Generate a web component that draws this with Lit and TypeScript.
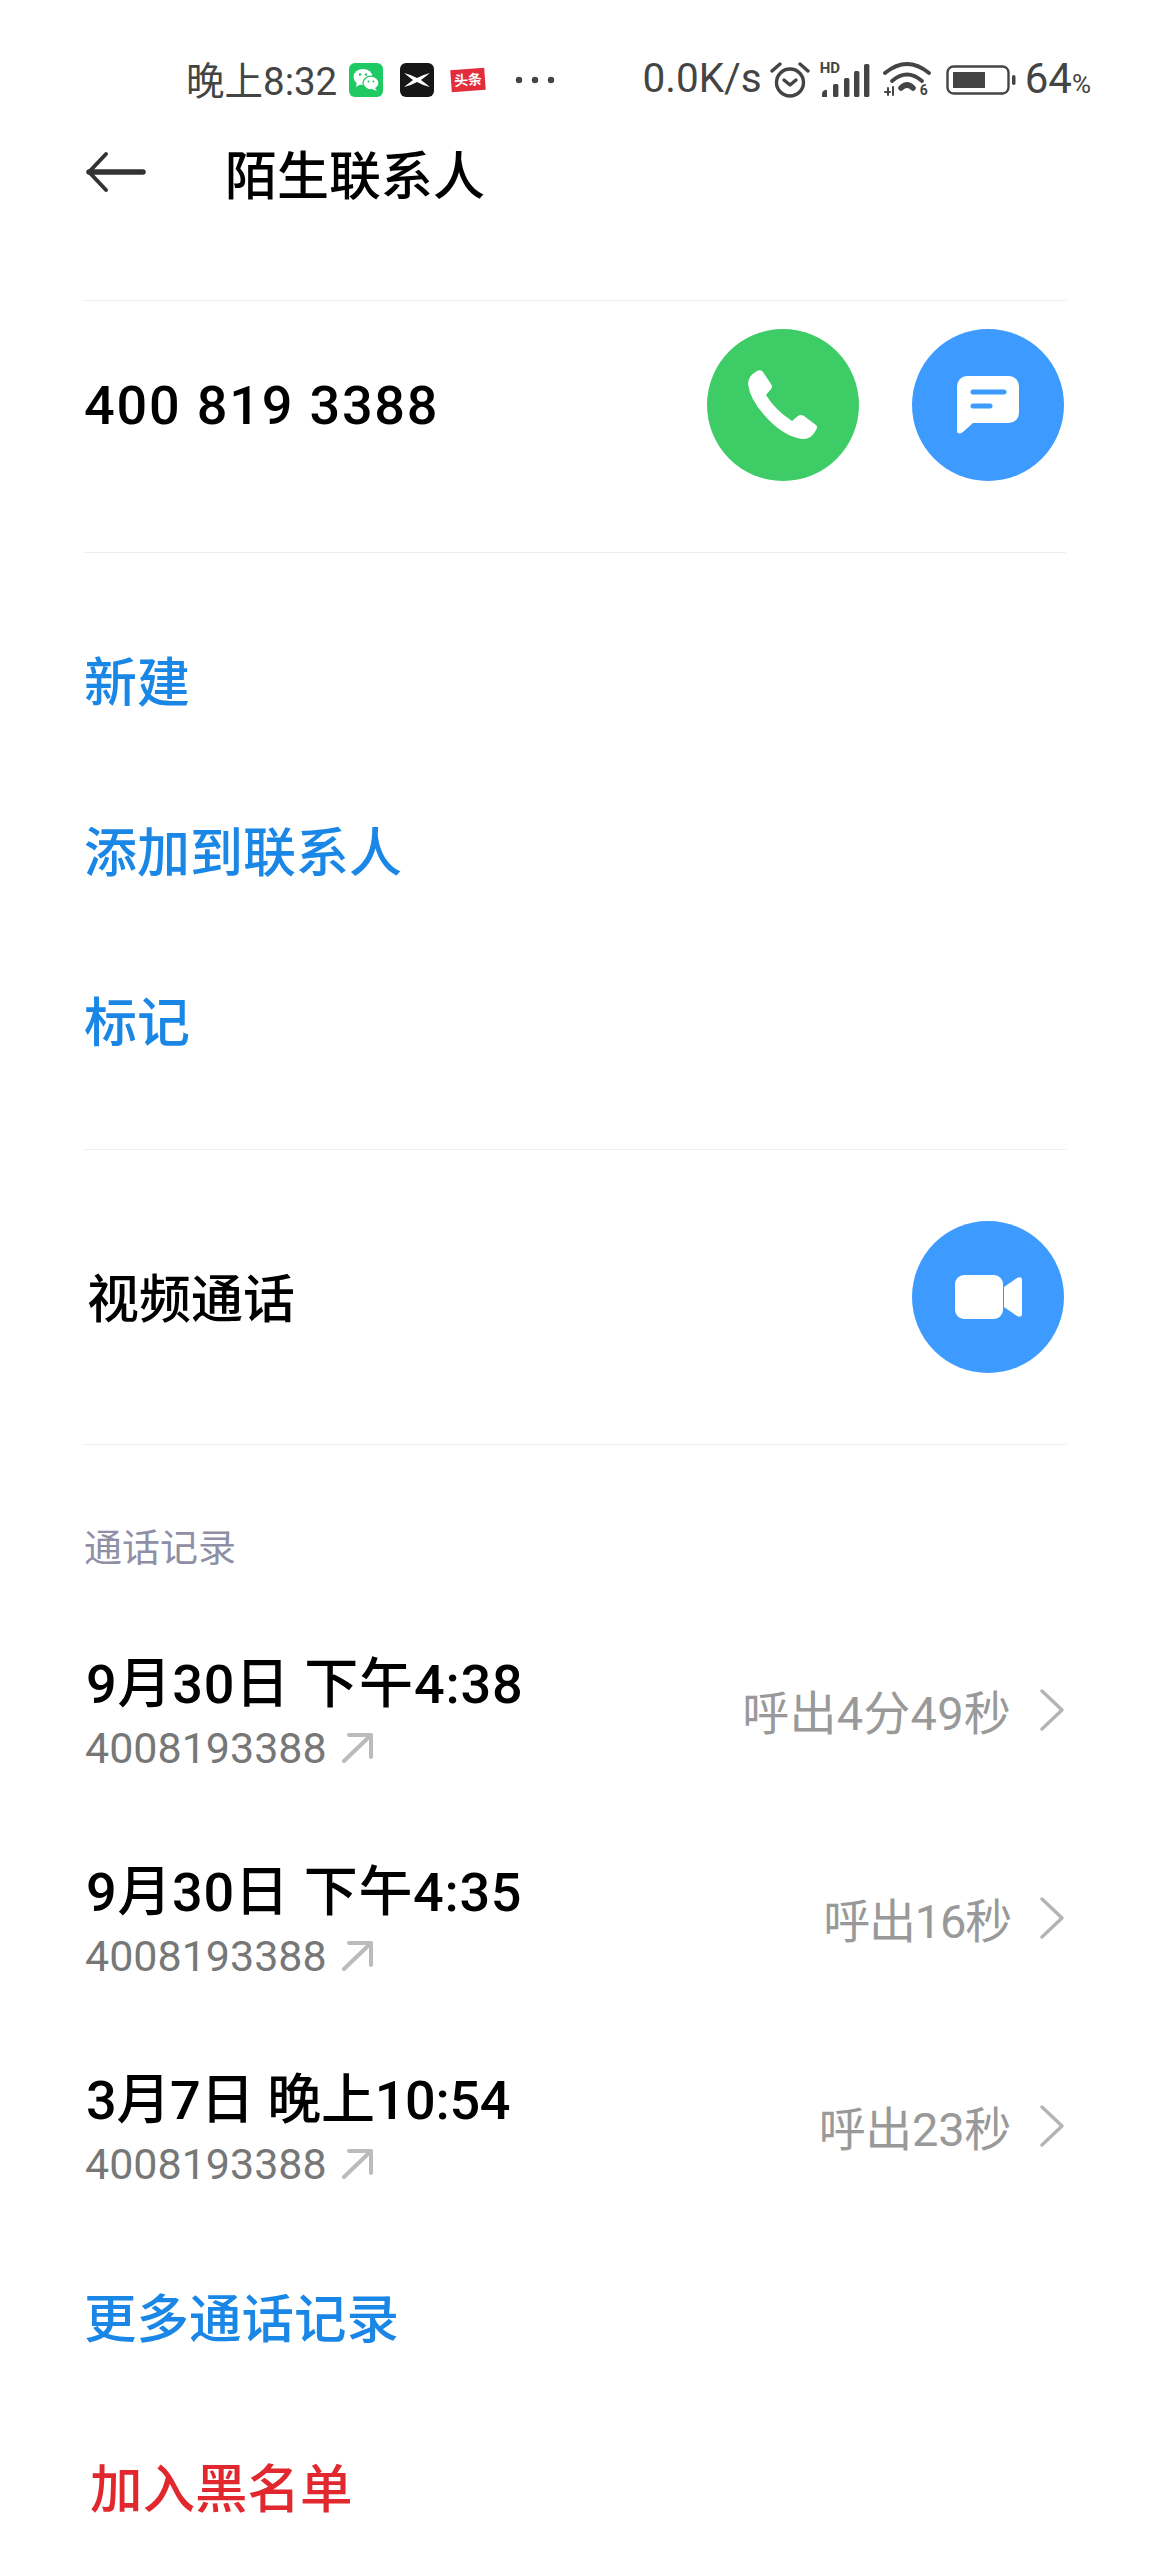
import {css, html, LitElement} from 'lit';
import {customElement} from 'lit/decorators.js';

const calls = [
	{when: '9月30日 下午4:38', result: '呼出4分49秒', whenTrack: 0.8, resultTrack: 0.2},
	{when: '9月30日 下午4:35', result: '呼出16秒', whenTrack: 0.7, resultTrack: -1.2},
	{when: '3月7日 晚上10:54', result: '呼出23秒', whenTrack: -0.3, resultTrack: -0.3},
];

type Call = typeof calls[number];

@customElement('app-root')
export class AppRoot extends LitElement {
	protected render() {
		return html`
		<div class="status">
			<span class="time">晚上8:32</span>
			${this.renderNotifications()}
			<span class="grow"></span>
			${this.renderSystemIcons()}
		</div>
		<div class="header">
			<svg class="back" width="60" height="42" viewBox="0 0 60 42" fill="none" stroke="#333" stroke-width="4" stroke-linecap="round" stroke-linejoin="round">
				<path d="M20 3 3 21l17 18"/>
				<path d="M3 21h54" stroke-width="5.5"/>
			</svg>
			<span class="title">陌生联系人</span>
		</div>

		<div class="content">
			<div class="divider first"></div>
			<div class="row number-row">
				<span class="number">400 819 3388</span>
				<div class="actions">
					<div class="circle green">
						<svg width="70" height="70" viewBox="0 0 70 70" fill="#fff"><path d="M9 1Q13-1 15 2L23 14Q25 17 23 19L18 25Q27 40 44 51L50 46Q53 44 56 46L68 55Q70 57 68 60Q63 70 54 69Q35 66 18 47Q2 30 0 14Q0 6 9 1Z"/></svg>
					</div>
					<div class="circle blue">
						<svg width="62" height="58" viewBox="0 0 62 58">
							<path fill="#fff" d="M10 0H52a10 10 0 0 1 10 10V37a10 10 0 0 1-10 10H16L6 56Q0 60 0 54V10A10 10 0 0 1 10 0Z"/>
							<path stroke="#3d9bff" stroke-width="5" stroke-linecap="round" fill="none" d="M16 16H47M16 30H33"/>
						</svg>
					</div>
				</div>
			</div>
			<div class="divider"></div>

			<div class="links">
				<div class="link">新建</div>
				<div class="link">添加到联系人</div>
				<div class="link">标记</div>
			</div>
			<div class="divider"></div>

			<div class="row video-row">
				<span class="video-label">视频通话</span>
				<div class="circle blue video">
					<svg width="67" height="44" viewBox="0 0 67 44" fill="#fff">
						<rect width="48" height="44" rx="9"/>
						<path d="M49 12 62 3Q67 1 67 5V39Q67 43 62 41L49 32Z"/>
					</svg>
				</div>
			</div>
			<div class="divider"></div>

			<div class="section-label">通话记录</div>
			${calls.map(c => this.renderCall(c))}
			<div class="link more">更多通话记录</div>
			<div class="link block">加入黑名单</div>
		</div>
		`;
	}

	private renderNotifications() {
		return html`
		<svg class="app wechat" width="34" height="34" viewBox="0 0 34 34">
			<rect width="34" height="34" rx="6" fill="#1fc964"/>
			<ellipse cx="14" cy="14" rx="9.5" ry="8" fill="#fff"/>
			<path d="M8 19l-1 5 5-3z" fill="#fff"/>
			<ellipse cx="22" cy="20" rx="8" ry="6.8" fill="#fff" stroke="#1fc964" stroke-width="1.2"/>
			<path d="M26 25l2 3-5-2z" fill="#fff"/>
			<circle cx="11" cy="11.5" r="1.2" fill="#1fc964"/>
			<circle cx="17" cy="11.5" r="1.2" fill="#1fc964"/>
			<circle cx="19.5" cy="18.5" r="1" fill="#1fc964"/>
			<circle cx="24.5" cy="18.5" r="1" fill="#1fc964"/>
		</svg>
		<svg class="app x" width="34" height="34" viewBox="0 0 34 34">
			<rect width="34" height="34" rx="6" fill="#161616"/>
			<path fill="#fff" d="M4 10Q12 12 17 15Q22 12 30 10Q25 14 21 17Q25 20 30 24Q22 22 17 19Q12 22 4 24Q9 20 13 17Q9 14 4 10Z"/>
		</svg>
		<span class="toutiao">头条</span>
		<svg class="dots" width="40" height="8" viewBox="0 0 40 8" fill="#444">
			<circle cx="4" cy="4" r="3.2"/><circle cx="20" cy="4" r="3.2"/><circle cx="36" cy="4" r="3.2"/>
		</svg>
		`;
	}

	private renderSystemIcons() {
		return html`
		<span class="speed">0.0K/s</span>
		<svg class="alarm" width="40" height="36" viewBox="0 0 40 36" fill="none" stroke="#444" stroke-width="3.4">
			<circle cx="20" cy="20.5" r="13.5"/>
			<path d="M14 18l6 5 6-5" stroke-linecap="round" stroke-linejoin="round"/>
			<path d="M2 9l8-7M38 9l-8-7" stroke-linecap="round"/>
		</svg>
		<div class="signal">
			<span class="hd">HD</span>
			<svg width="50" height="34" viewBox="0 0 50 34" fill="#444">
				<path d="M2 34v-3q0-3 3-4 2-1 2 1v6z"/>
				<rect x="13" y="21" width="5.4" height="13" rx="1.5"/>
				<rect x="24" y="15" width="5.4" height="19" rx="1.5"/>
				<rect x="34" y="8" width="5.4" height="26" rx="1.5"/>
				<rect x="44" y="1" width="5.4" height="33" rx="1.5"/>
			</svg>
		</div>
		<div class="wifi">
			<svg width="48" height="38" viewBox="0 0 48 38" fill="none" stroke="#444" stroke-width="3.8" stroke-linecap="round">
				<path d="M2 12Q24-6 46 12"/>
				<path d="M9 20Q24 7 39 20"/>
				<path d="M18 27Q24 21 30 27" stroke-width="5.5"/>
				<path d="M2 31h5M5 27v7M10 26v8" stroke-width="2"/>
			</svg>
			<span class="wifi-gen">6</span>
		</div>
		<svg class="battery" width="70" height="30" viewBox="0 0 70 30">
			<rect x="1.5" y="1.5" width="61" height="27" rx="6" fill="none" stroke="#444" stroke-width="2.4"/>
			<rect x="7" y="7" width="32" height="16" fill="#444"/>
			<rect x="66" y="10" width="3.5" height="10" rx="1.7" fill="#444"/>
		</svg>
		<span class="pct">64<small>%</small></span>
		`;
	}

	private renderCall(c: Call) {
		return html`
		<div class="row call">
			<div>
				<div class="when" style="letter-spacing: ${c.whenTrack}px">${c.when}</div>
				<div class="sub">
					<span>4008193388</span>
					<svg width="32" height="32" viewBox="0 0 32 32" fill="none" stroke="#bbb" stroke-width="4" stroke-linecap="round" stroke-linejoin="round">
						<path d="M3 29 30 3M8 3h22v22"/>
					</svg>
				</div>
			</div>
			<div class="result">
				<span style="letter-spacing: ${c.resultTrack}px">${c.result}</span>
				<svg width="24" height="42" viewBox="0 0 24 42" fill="none" stroke="#b4b4b4" stroke-width="3.4" stroke-linecap="round" stroke-linejoin="round">
					<path d="M2 2 22 21 2 40"/>
				</svg>
			</div>
		</div>
		`;
	}

	static styles = css`
		:host {
			display: block;
			width: 1150px;
			height: 2556px;
			background: #fff;
			overflow: hidden;
			font-family: Roboto, "Noto Sans CJK SC", sans-serif;
			color: #000;
		}

		.status {
			display: flex;
			align-items: center;
			box-sizing: border-box;
			height: 130px;
			padding: 30px 59px 0 186px;
			color: #444;
		}
		.grow { flex: 1; }
		.time { font-size: 38.5px; width: 151px; white-space: nowrap; margin-bottom: 4px; }
		.app { flex: none; }
		.wechat { margin-left: 12px; }
		.x { margin-left: 17px; }
		.toutiao {
			flex: none;
			box-sizing: border-box;
			width: 34px;
			height: 22px;
			margin-left: 17px;
			background: #e22d3a;
			color: #fff;
			font-size: 14px;
			font-weight: 700;
			line-height: 22px;
			text-align: center;
			white-space: nowrap;
			transform: rotate(-4deg);
		}
		.dots { margin-left: 30px; }
		.speed { font-size: 40.5px; white-space: nowrap; margin-bottom: 4px; }
		.alarm { margin-left: 8px; }
		.signal { display: flex; margin-left: 10px; position: relative; }
		.hd {
			position: absolute;
			left: 0;
			top: -3px;
			font-size: 15px;
			font-weight: 700;
			line-height: 16px;
		}
		.wifi { display: flex; margin-left: 13px; position: relative; }
		.wifi-gen {
			position: absolute;
			right: 3px;
			bottom: 2px;
			font-size: 14px;
			font-weight: 700;
			line-height: 14px;
		}
		.battery { margin-left: 15px; }
		.pct { margin-left: 9px; font-size: 42px; white-space: nowrap; margin-bottom: 4px; }
		.pct small { font-size: 26px; }

		.header {
			display: flex;
			align-items: center;
			height: 84px;
			padding-left: 86px;
		}
		.title {
			margin-left: 79px;
			font-size: 52px;
			font-weight: 500;
		}

		.content {
			width: 982px;
			margin-left: 84px;
		}
		.divider {
			height: 1px;
			background: #eee;
		}
		.divider.first { margin-top: 86px; }

		.row {
			display: flex;
			align-items: center;
			justify-content: space-between;
		}
		.number-row {
			height: 208px;
			margin-bottom: 43px;
		}
		.number { font-size: 54px; font-weight: 500; letter-spacing: 1.8px; }
		.actions { display: flex; gap: 53px; padding-right: 2px; }
		.circle {
			display: flex;
			align-items: center;
			justify-content: center;
			width: 152px;
			height: 152px;
			border-radius: 50%;
		}
		.video { margin-right: 2px; }
		.green { background: #3ecc66; }
		.blue { background: #3d9bff; }

		.links { padding: 41px 0 44.5px; }
		.link {
			display: flex;
			align-items: center;
			height: 170px;
			font-size: 53px;
			font-weight: 500;
			color: #1a87e6;
		}

		.video-row { height: 294px; }
		.video-label { margin: 0 0 2px 3px; font-size: 52px; font-weight: 500; }

		.section-label {
			margin: 83px 0 44px;
			height: 40px;
			line-height: 40px;
			font-size: 38px;
			color: #8f8fa6;
		}

		.call { height: 208px; }
		.when { margin-left: 2px; font-size: 54px; font-weight: 500; line-height: 64px; white-space: nowrap; }
		.sub {
			display: flex;
			align-items: center;
			gap: 14px;
			margin-left: 1px;
			font-size: 43px;
			line-height: 62px;
			color: #777;
		}
		.result {
			display: flex;
			align-items: center;
			gap: 29px;
			margin-bottom: 12px;
			padding-right: 2px;
			font-size: 47px;
			color: #999;
		}

		.more { height: 158px; font-size: 52.5px; }
		.block { height: 183px; margin-left: 6px; font-size: 52.5px; color: #e0282e; }
	`;
}
